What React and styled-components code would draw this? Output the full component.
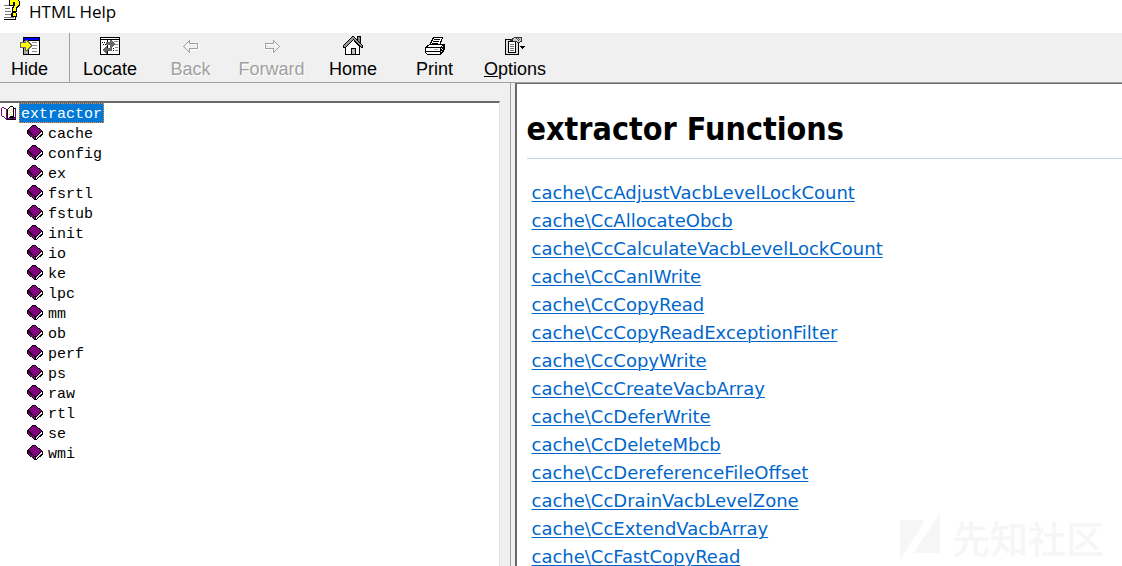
import React from "react";
import styled, { createGlobalStyle } from "styled-components";

const Global = createGlobalStyle`
  *, *::before, *::after { box-sizing: border-box; }
  html, body, #root { height: 100%; }
  body { margin: 0; overflow: hidden; background: #fff; color: #000; }
`;

const Window = styled.div`
  display: flex;
  flex-direction: column;
  height: 100%;
  background: #f0f0f0;
`;

const TitleBar = styled.header`
  display: flex;
  align-items: flex-start;
  gap: 8px;
  height: 33px;
  flex: none;
  padding-left: 4px;
  background: #fff;
  font: 17px/24px "Open Sans", "Noto Sans", sans-serif;
`;

const Title = styled.span``;

const Toolbar = styled.nav`
  display: flex;
  flex: none;
  height: 50px;
  border-bottom: 1px solid #a0a0a0;
`;

const ToolButton = styled.button`
  display: flex;
  flex-direction: column;
  align-items: center;
  gap: 1px;
  width: ${(p) => p.$width}px;
  height: 49px;
  padding: 3px ${(p) => (p.$divided ? 10 : 0)}px 0 0;
  border: 0;
  border-right: ${(p) => (p.$divided ? "1px solid #a0a0a0" : "0")};
  background: transparent;
  color: #000;
  font: 18px/24px "Liberation Sans", Arial, sans-serif;

  &:disabled {
    color: #a0a0a0;
    text-shadow: 1px 1px #fff;
  }
`;

const Icon = styled.svg`
  display: block;
  flex: none;
  shape-rendering: crispEdges;
`;

const Panes = styled.div`
  display: flex;
  flex: 1;
  min-height: 0;
`;

const Sidebar = styled.aside`
  display: flex;
  width: 45.5%;
  flex: none;
  padding: 18px 10px 0 0;
  border-right: 1px solid #a0a0a0;
`;

const TreePanel = styled.div`
  flex: 1;
  background: #fff;
  border-top: 2px solid #696969;
  border-right: 1px solid #e3e3e3;
`;

const Tree = styled.ul`
  margin: 0;
  padding: 0;
  list-style: none;
  font: 15px/20px "Liberation Mono", "Courier New", monospace;
`;

const TreeItem = styled.li`
  display: flex;
  align-items: center;
  gap: 2px;
  height: 20px;
  padding-left: ${(p) => (p.$root ? 1 : 27)}px;
`;

const TreeLabel = styled.span`
  padding: 4px 1px 0;
  line-height: 14px;
  border: 1px dotted ${(p) => (p.$selected ? "#ff8728" : "transparent")};
  background: ${(p) => (p.$selected ? "#0078d7" : "transparent")};
  color: ${(p) => (p.$selected ? "#fff" : "#000")};
`;

const Content = styled.main`
  flex: 1;
  min-width: 0;
  margin-left: 4px;
  padding: 25px 0 0 10px;
  overflow: hidden;
  background: #fff;
  border-left: 2px solid #696969;
  border-top: 1px solid #696969;
`;

const Heading = styled.h1`
  margin: 0 0 20px;
  padding-bottom: 8px;
  border-bottom: 1px solid #c0d4f0;
  font: bold 32px/41px "DejaVu Sans Condensed", "DejaVu Sans", Tahoma, sans-serif;
`;

const LinkList = styled.ul`
  margin: 0;
  padding: 0 0 0 5px;
  list-style: none;
  font: 18px/28px "DejaVu Sans", Verdana, sans-serif;
`;

const DocLink = styled.a`
  color: #0066cc;
  text-decoration: underline;
  text-decoration-thickness: 1px;
  text-underline-offset: 2px;
`;

const Watermark = styled.div`
  position: absolute;
  right: 18px;
  bottom: 5px;
  display: flex;
  align-items: center;
  gap: 12px;
  color: #f6f6f6;
  pointer-events: none;
  font: 500 38px/48px "Noto Sans CJK SC", sans-serif;
`;

const HelpIcon = () => (
  <Icon width="17" height="21" viewBox="0 0 17 21">
    <path d="M1 6h10v13H1z" fill="#fff" />
    <path d="M0 5h7v1H0zM1 8h5v1H1zM1 11h6v1H1zM1 14h6v1H1zM0 17h10v1H0z" fill="#777" />
    <path d="M11 15h1v5h-1zM0 19h12v1H0z" />
    <path d="M5 0h10v1h1v5h-1v1h-1v1h-1v4h-1v1h1v4H7v-4h1V7h1V6H5z" />
    <path d="M6 0h8v1h1v4h-1v1h-1v1h-1v4H9V8h1V6h1V2H9v3H6zM9 13h3v3H9z" fill="#ff0" />
  </Icon>
);

const HideIcon = () => (
  <Icon width="20" height="20" viewBox="0 0 20 20">
    <path d="M3 1h17v18H3z" />
    <path d="M4 2h15v2H4z" fill="#00f" />
    <path d="M4 5h4v13H4z" fill="#aaa" />
    <path d="M9 5h10v13H9z" fill="#fff" />
    <path d="M12 6h5v1h-5zM12 9h5v1h-5zM12 12h5v1h-5zM12 15h5v1h-5z" fill="#888" />
    <path d="M0 6h5V4h2l5 5v1l-5 5H5v-3H0z" fill="#666" />
    <path d="M1 7h5V5l5 4v1l-5 4v-3H1z" fill="#ff0" />
  </Icon>
);

const LocateIcon = () => (
  <Icon width="20" height="20" viewBox="0 0 20 20">
    <path d="M0 1h20v18H0z" />
    <path d="M1 2h18v1H1zM1 4h6v14H1zM8 4h11v14H8z" fill="#fff" />
    <path d="M2 6h1v1H2zM4 6h1v1H4zM3 8h1v1H3zM5 8h1v1H5zM11 12h1v1h-1zM13 12h1v1h-1zM11 14h1v1h-1zM13 14h1v1h-1z" />
    <path d="M6 6h4V4h1l4 4-4 4h-1V9H6zM7 10v2h5v3H7v3l-5-4z" fill="#666" />
    <path d="M14 5h4v1h-4zM15 8h3v1h-3zM15 11h3v1h-3zM15 14h3v1h-3z" fill="#888" />
  </Icon>
);

const ArrowIcon = ({ right }) => (
  <Icon width="20" height="20" viewBox="0 0 20 20">
    <g transform={right ? "translate(20 0) scale(-1 1)" : undefined} fill="none">
      <path d="M3.5 11.5l6-6v3h8v5h-8v4z" stroke="#fff" />
      <path d="M2.5 10.5l6-6v3h8v5h-8v4z" stroke="#a0a0a0" />
    </g>
  </Icon>
);

const HomeIcon = () => (
  <Icon width="20" height="20" viewBox="0 0 20 20">
    <path d="M14 0h4v9h-4z" />
    <path d="M15 1h2v6h-2z" fill="#888" />
    <path d="M2.500 10.500l7-8 7 8v8h-14z" fill="#fff" stroke="#000" />
    <path d="M0 10L9 0h2l9 10v2h-2L10 4l-8 8H0z" />
    <path d="M1 10l8-9h2l8 9v1h-1l-8-8-8 8H1z" fill="#999" />
    <path d="M8.500 18.500v-6h4v6z" fill="#bbb" stroke="#000" />
  </Icon>
);

const PrintIcon = () => (
  <Icon width="20" height="20" viewBox="0 0 20 20">
    <path d="M4.500 9.500l4-8h9l-3 8z" fill="#fff" stroke="#000" />
    <path d="M9 3h6v1H9zM8 5h6v1H8zM7 7h6v1H7z" />
    <path d="M.5 11.500l4-3h15v5l-4 5h-13l-2-2z" fill="#fff" stroke="#000" />
    <path d="M1 11h14v1H1zM1 15h14v1H1zM15 11l4-3v6l-4 4z" />
    <path d="M16 12h1v1h-1zM16 15h1v1h-1zM17 10h1v1h-1zM17 13h1v1h-1z" fill="#fff" />
    <path d="M9 13h4v1H9z" fill="#aaa" />
  </Icon>
);

const OptionsIcon = () => (
  <Icon width="20" height="20" viewBox="0 0 20 20">
    <path d="M0 3h14v16H0z" />
    <path d="M1 4h12v14H1z" fill="#ddd" />
    <path d="M3 5h8v12H3z" />
    <path d="M4 6h6v10H4z" fill="#fff" />
    <path d="M5 8h4v1H5zM5 10h4v1H5zM5 12h4v1H5zM5 14h4v1H5z" fill="#777" />
    <path d="M5.500 4.500l4-3h7v4l-3 1-3-1z" fill="#ccc" stroke="#333" />
    <path d="M11 2h1v1h-1zM13 2h1v1h-1zM12 3h1v1h-1zM14 3h1v1h-1zM13 4h1v1h-1z" fill="#555" />
    <path d="M15 10h5v1h-5zM16 11h3v1h-3zM17 12h1v1h-1z" />
  </Icon>
);

const OpenBook = () => (
  <Icon width="16" height="16" viewBox="0 0 16 16">
    <path d="M0 3h1V2h2v1h2v1h1v11H5v-1H4v-1H3v-1H1v-1H0z" fill="#800080" />
    <path d="M1 3h2v1h2v9H4v-1H3v-1H1z" fill="#fff" />
    <path d="M6 4h1V3h1V2h1V1h3v1h1v1h2v12H6z" />
    <path d="M7 4h1V3h1V2h3v9H9v1H8v1H7z" fill="#fff" />
    <path d="M8 5h1v1H8zM10 4h1v1h-1zM9 7h1v1H9zM11 6h1v1h-1zM8 9h1v1H8zM10 9h1v1h-1z" fill="#dd0" />
    <path d="M13 4h1v8h-1z" fill="#fff" />
    <path d="M14 4h1v10H7v-1h7z" fill="#800080" />
  </Icon>
);

const ClosedBook = () => (
  <Icon width="17" height="16" viewBox="0 0 17 16">
    <path d="M0 5l6-5h2l8 6v4l-7 5H8L0 9z" />
    <path d="M1 5l5-4h2l7 5-6 5H8z" fill="#800080" />
    <path d="M9 12l6-5v2l-6 5z" fill="#fff" />
    <path d="M1 7l7 5v2L1 9z" fill="#800080" />
    <path d="M10 13h1v-1h1v-1h1v-1h1V9h-1v1h-1v1h-1v1h-1z" fill="#aaa" />
  </Icon>
);

const tools = [
  { label: "Hide", width: 70, divided: true, icon: <HideIcon /> },
  { label: "Locate", width: 80, icon: <LocateIcon /> },
  { label: "Back", width: 81, disabled: true, icon: <ArrowIcon /> },
  { label: "Forward", width: 81, disabled: true, icon: <ArrowIcon right /> },
  { label: "Home", width: 82, icon: <HomeIcon /> },
  { label: "Print", width: 81, icon: <PrintIcon /> },
  { label: <><u>O</u>ptions</>, name: "Options", width: 80, icon: <OptionsIcon /> },
];

const topics = ["cache", "config", "ex", "fsrtl", "fstub", "init", "io", "ke", "lpc", "mm", "ob", "perf", "ps", "raw", "rtl", "se", "wmi"];

const functions = [
  "CcAdjustVacbLevelLockCount", "CcAllocateObcb", "CcCalculateVacbLevelLockCount", "CcCanIWrite",
  "CcCopyRead", "CcCopyReadExceptionFilter", "CcCopyWrite", "CcCreateVacbArray", "CcDeferWrite",
  "CcDeleteMbcb", "CcDereferenceFileOffset", "CcDrainVacbLevelZone", "CcExtendVacbArray", "CcFastCopyRead",
];

export default function App() {
  return (
    <Window>
      <Global />
      <TitleBar><HelpIcon /><Title>HTML Help</Title></TitleBar>
      <Toolbar>
        {tools.map((t) => (
          <ToolButton key={t.name || t.label} type="button" $width={t.width} $divided={t.divided} disabled={t.disabled}>
            {t.icon}
            <span>{t.label}</span>
          </ToolButton>
        ))}
      </Toolbar>
      <Panes>
        <Sidebar>
          <TreePanel>
            <Tree>
              <TreeItem $root><OpenBook /><TreeLabel $selected>extractor</TreeLabel></TreeItem>
              {topics.map((t) => (
                <TreeItem key={t}><ClosedBook /><TreeLabel>{t}</TreeLabel></TreeItem>
              ))}
            </Tree>
          </TreePanel>
        </Sidebar>
        <Content>
          <Heading>extractor Functions</Heading>
          <LinkList>
            {functions.map((f) => (
              <li key={f}><DocLink href={`#${f}`}>{`cache\\${f}`}</DocLink></li>
            ))}
          </LinkList>
        </Content>
      </Panes>
      <Watermark>
        <svg width="40" height="48" viewBox="0 0 40 48" fill="currentColor">
          <path d="M0 7h25L0 47zM40 0v40H14z" />
        </svg>
        <span>先知社区</span>
      </Watermark>
    </Window>
  );
}
